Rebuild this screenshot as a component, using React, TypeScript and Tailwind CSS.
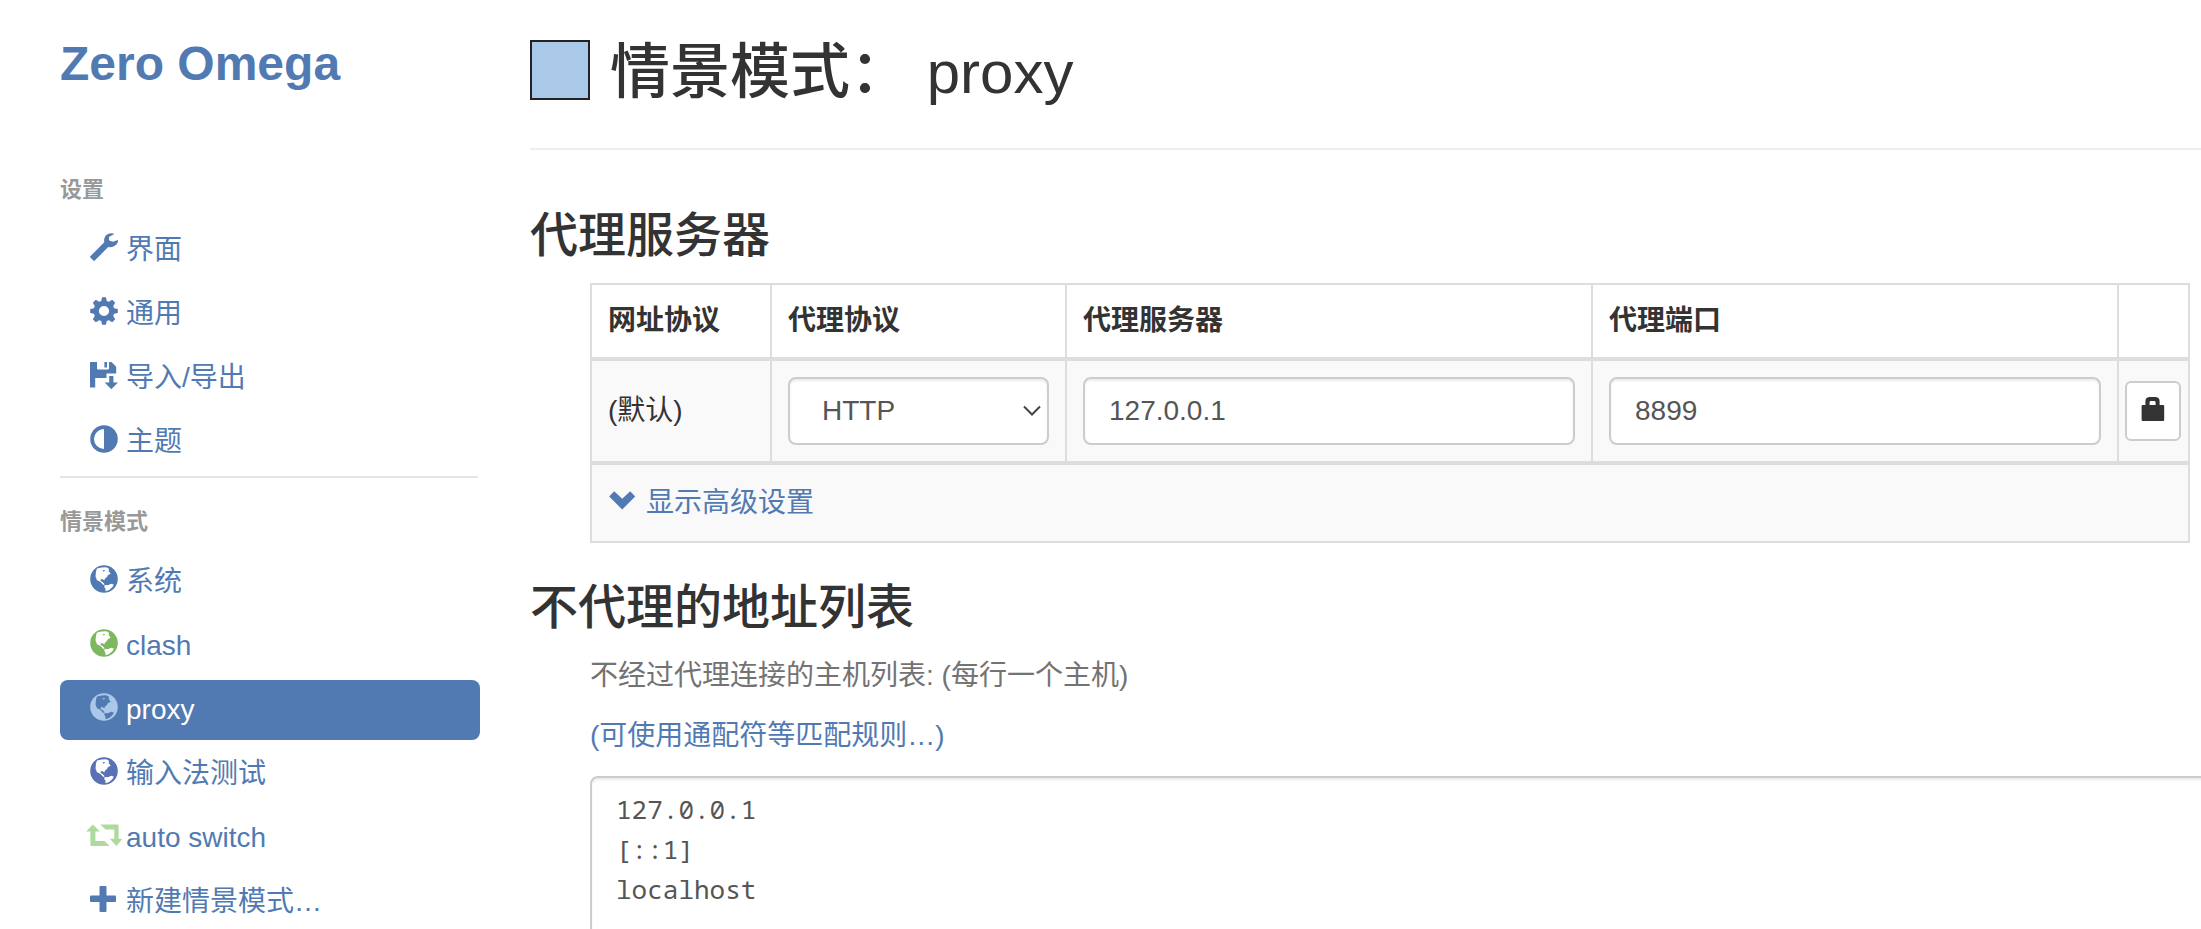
import React from 'react';

type IconProps = { className?: string };

const WrenchIcon: React.FC<IconProps> = ({ className }) => (
    <svg viewBox="0 0 28 28" fill="currentColor" className={className} aria-hidden="true">
        <path d="M24.4 0.9C21.9-0.3 18.3 0.1 16.1 2.3C14.3 4.2 13.8 6.7 14.3 9.3L0.4 23.2Q-0.3 23.9 0.4 24.6L3.4 27.6Q4.1 28.3 4.8 27.6L18.2 14C20.7 14.6 23.4 14.1 25.4 12.3C27.4 10.5 28.3 8.3 28 7L22.9 8.8L19.2 7.4L18.9 3.9Z" />
    </svg>
);

const CogIcon: React.FC<IconProps> = ({ className }) => (
    <svg viewBox="0 0 28 28" fill="currentColor" className={className} aria-hidden="true">
        <path
            fillRule="evenodd"
            d="M12.1 0.3H15.9L16.8 3.9L18.8 4.7L22.2 2.8L25.2 5.8L23.2 9L24.1 11.2L27.8 12.1V15.9L24.1 16.8L23.2 19L25.2 22.2L22.2 25.2L18.8 23.3L16.8 24.1L15.9 27.7H12.1L11.2 24.1L9.2 23.3L5.8 25.2L2.8 22.2L4.8 19L3.9 16.8L0.2 15.9V12.1L3.9 11.2L4.8 9L2.8 5.8L5.8 2.8L9.2 4.7L11.2 3.9ZM14 8.9A5.1 5.1 0 1 0 14 19.1A5.1 5.1 0 1 0 14 8.9Z"
        />
    </svg>
);

const SaveIcon: React.FC<IconProps> = ({ className }) => (
    <svg viewBox="0 0 28 28" fill="currentColor" className={className} aria-hidden="true">
        <path d="M0.6 1H7V7.6Q7 8.4 7.8 8.4H18.2Q19 8.4 19 7.6V1H21.5L26.2 5.7V12.4H16.5V17H5.2V26.5H0.6Q0 26.5 0 25.9V1.6Q0 1 0.6 1ZM14.4 1H17V6.4H14.4Z" />
        <path d="M19.2 15H23.4V21.6H28L21.3 28.2L14.6 21.6H19.2Z" />
    </svg>
);

const AdjustIcon: React.FC<IconProps> = ({ className }) => (
    <svg viewBox="0 0 28 28" fill="currentColor" className={className} aria-hidden="true">
        <path fillRule="evenodd" d="M14 0.2A13.8 13.8 0 1 1 14 27.8A13.8 13.8 0 1 1 14 0.2ZM14 4A10 10 0 0 0 14 24Z" />
    </svg>
);

const GlobeIcon: React.FC<IconProps> = ({ className }) => (
    <svg viewBox="0 0 28 28" fill="currentColor" className={className} aria-hidden="true">
        <path
            fillRule="evenodd"
            d="M14 0.2A13.8 13.8 0 1 1 14 27.8A13.8 13.8 0 1 1 14 0.2ZM7 3.6L6 6.5L5.5 11.5L7 15.2L10.2 16.8L12.6 19.2L14.2 20.2L14.4 19L12.9 17.2L11 16.2L10.4 14.8L11.6 13.9L13.2 14.4L14.3 15.6L15 13.6L17 12L17.8 10.3L20.6 8.8L19.7 7.2L18.6 6.2L19 5.2L18.5 3.2L16.2 2.2L11.5 2.5ZM14.6 20.2L14.2 21.8L15.4 23.8L15.6 26.2L19.2 25L22.5 22L23.8 19.4L21 18.7L18.5 20ZM12.4 5.6L14.2 5L15.3 5.8L13.2 6.6Z"
        />
    </svg>
);

const RetweetIcon: React.FC<IconProps> = ({ className }) => (
    <svg viewBox="0 0 36 28" fill="currentColor" className={className} aria-hidden="true">
        <path d="M6.9 3.5L13.9 10.6H9.4V20H18.5L23.5 25H5.3Q4.4 25 4.4 24.1V10.6H0Z" />
        <path d="M14.3 3.5H31.6Q32.6 3.5 32.6 4.4V17.8H36.3L30.5 25L23.8 17.8H28.3V8.6H19.5Z" />
    </svg>
);

const PlusIcon: React.FC<IconProps> = ({ className }) => (
    <svg viewBox="0 0 28 28" fill="currentColor" className={className} aria-hidden="true">
        <path d="M10.5 1H15.5Q16.5 1 16.5 2V10.5H25Q26 10.5 26 11.5V16Q26 17 25 17H16.5V26Q16.5 27 15.5 27H10.5Q9.5 27 9.5 26V17H1Q0 17 0 16V11.5Q0 10.5 1 10.5H9.5V2Q9.5 1 10.5 1Z" />
    </svg>
);

const ChevronIcon: React.FC<IconProps> = ({ className }) => (
    <svg viewBox="0 0 28 28" fill="currentColor" className={className} aria-hidden="true">
        <path d="M6.2 5.2L14.2 12.8L22.2 5.2L27.2 10.4L14.2 23.6L1.2 10.4Z" />
    </svg>
);

const LockIcon: React.FC<IconProps> = ({ className }) => (
    <svg viewBox="0 0 24 24" fill="currentColor" className={className} aria-hidden="true">
        <path
            fillRule="evenodd"
            d="M8.2 0H14.8Q18.6 0.6 18.6 4.2V8H22Q23.2 8 23.2 9.2V22.8Q23.2 24 22 24H1.8Q0.6 24 0.6 22.8V9.2Q0.6 8 1.8 8H4.4V4.2Q4.4 0.6 8.2 0ZM9.4 4L8.6 5V8H14.6V5L13.8 4Z"
        />
    </svg>
);

const SETTINGS = [
    { label: '界面', icon: WrenchIcon },
    { label: '通用', icon: CogIcon },
    { label: '导入/导出', icon: SaveIcon },
    { label: '主题', icon: AdjustIcon },
];

const PROFILES = [
    { label: '系统', icon: GlobeIcon, color: 'text-[#527ab2]' },
    { label: 'clash', icon: GlobeIcon, color: 'text-[#7db75f]' },
    { label: 'proxy', icon: GlobeIcon, color: 'text-[#aac9e9]', active: true },
    { label: '输入法测试', icon: GlobeIcon, color: 'text-[#5872b5]' },
    { label: 'auto switch', icon: RetweetIcon, color: 'text-[#aedb9c]', wide: true },
    { label: '新建情景模式…', icon: PlusIcon, color: 'text-[#527ab2]' },
];

type NavItemProps = {
    label: string;
    icon: React.FC<IconProps>;
    color?: string;
    active?: boolean;
    wide?: boolean;
};

const NavItem: React.FC<NavItemProps> = ({ label, icon: Icon, color = '', active, wide }) => (
    <li>
        <a
            href="#"
            aria-current={active ? 'page' : undefined}
            className={`flex h-15 items-center gap-2 rounded-lg px-[30px] ${active ? 'bg-[#527ab2] text-white' : 'text-[#527ab2]'}`}
        >
            <span className="flex w-7 shrink-0 justify-center pb-1.5">
                <Icon className={`h-7 shrink-0 ${wide ? 'w-9' : 'w-7'} ${color}`} />
            </span>
            {label}
        </a>
    </li>
);

const NavHeader: React.FC<{ children: React.ReactNode }> = ({ children }) => (
    <h2 className="text-[22px] leading-10 font-bold text-[#999]">{children}</h2>
);

const inputStyle =
    'h-17 w-full rounded-lg border-2 border-[#ccc] bg-white px-6 text-[#555] shadow-[inset_0_2px_2px_rgba(0,0,0,0.075)]';
const cell = 'border-2 border-[#ddd] px-4 text-left';

export default function App() {
    return (
        <div className="flex h-screen overflow-hidden bg-white font-['Liberation_Sans','Noto_Sans_CJK_SC',sans-serif] text-[28px] leading-10 text-[#333]">
            <aside className="ml-15 w-105 shrink-0">
                <h1 className="pt-10 pb-0.5 text-5xl leading-12 font-bold text-[#527ab2]">Zero Omega</h1>
                <nav className="pt-20">
                    <NavHeader>设置</NavHeader>
                    <ul className="flex flex-col gap-1 pt-2.5">
                        {SETTINGS.map((item) => (
                            <NavItem key={item.label} {...item} />
                        ))}
                    </ul>
                    <hr className="my-1 mr-[2px] border-t-2 border-[#e5e5e5]" />
                    <div className="pt-5">
                        <NavHeader>情景模式</NavHeader>
                    </div>
                    <ul className="flex flex-col gap-1 pt-2.5">
                        {PROFILES.map((item) => (
                            <NavItem key={item.label} {...item} />
                        ))}
                    </ul>
                </nav>
            </aside>

            <main className="ml-[50px] min-w-0 flex-1">
                <header className="flex h-[150px] items-start border-b-2 border-[#eee] pt-10">
                    <input
                        type="text"
                        readOnly
                        aria-label="颜色"
                        className="size-15 shrink-0 border-2 border-[#222] bg-[#aac9e9]"
                    />
                    <h2 className="ml-5 text-6xl leading-[66px] font-medium">情景模式： <span className="font-normal">proxy</span></h2>
                </header>

                <section className="pt-[58px]">
                    <h3 className="text-5xl leading-14 font-medium">代理服务器</h3>
                    <div className="mt-[19px] mr-[11px] ml-15">
                        <table className="w-full table-fixed border-collapse">
                            <colgroup>
                                <col className="w-[180px]" />
                                <col className="w-[295px]" />
                                <col />
                                <col />
                                <col className="w-[71px]" />
                            </colgroup>
                            <thead>
                                <tr className="h-[75px] border-b-4 border-[#ddd]">
                                    <th scope="col" className={cell}>网址协议</th>
                                    <th scope="col" className={cell}>代理协议</th>
                                    <th scope="col" className={cell}>代理服务器</th>
                                    <th scope="col" className={cell}>代理端口</th>
                                    <td className={cell} />
                                </tr>
                            </thead>
                            <tbody className="bg-[#f9f9f9]">
                                <tr className="h-[104px] border-b-4 border-[#ddd]">
                                    <td className={cell}>(默认)</td>
                                    <td className={cell}>
                                        <div className="relative">
                                            <select aria-label="代理协议" defaultValue="HTTP" className={`${inputStyle} block appearance-none pl-8`}>
                                                <option>HTTP</option>
                                                <option>HTTPS</option>
                                                <option>SOCKS4</option>
                                                <option>SOCKS5</option>
                                            </select>
                                            <svg
                                                viewBox="0 0 18 12"
                                                fill="none"
                                                stroke="#444"
                                                strokeWidth="2"
                                                className="pointer-events-none absolute top-7 right-2 h-3 w-[18px]"
                                                aria-hidden="true"
                                            >
                                                <path d="M1 1.5L9 9.5L17 1.5" />
                                            </svg>
                                        </div>
                                    </td>
                                    <td className={cell}>
                                        <input type="text" aria-label="代理服务器" defaultValue="127.0.0.1" className={`${inputStyle} block`} />
                                    </td>
                                    <td className={cell}>
                                        <input type="text" aria-label="代理端口" defaultValue="8899" className={`${inputStyle} block`} />
                                    </td>
                                    <td className="border-2 border-[#ddd] pl-1.5">
                                        <button
                                            type="button"
                                            aria-label="代理登录"
                                            className="flex h-15 w-14 justify-center rounded-md border-2 border-[#ccc] bg-white pt-[14px]"
                                        >
                                            <LockIcon className="size-6" />
                                        </button>
                                    </td>
                                </tr>
                                <tr className="h-[79px]">
                                    <td colSpan={5} className="border-2 border-[#ddd] px-4">
                                        <a href="#" className="flex w-fit items-center gap-2.5 text-[#527ab2]">
                                            <ChevronIcon className="mb-1.5 size-7" />
                                            显示高级设置
                                        </a>
                                    </td>
                                </tr>
                            </tbody>
                        </table>
                    </div>
                </section>

                <section className="pt-[37px]">
                    <h3 className="text-5xl leading-14 font-medium">不代理的地址列表</h3>
                    <div className="ml-15 flex flex-col gap-5 pt-5">
                        <p className="text-[#737373]">不经过代理连接的主机列表: (每行一个主机)</p>
                        <p>
                            <a href="#" className="text-[#527ab2]">(可使用通配符等匹配规则…)</a>
                        </p>
                        <textarea
                            aria-label="不代理的地址列表"
                            rows={8}
                            defaultValue={'127.0.0.1\n[::1]\nlocalhost'}
                            className="-mr-4 resize-none rounded-lg border-2 border-[#ccc] px-6 py-[11px] font-['Noto_Sans_Mono','DejaVu_Sans_Mono',monospace] text-[26px] leading-10 text-[#555] shadow-[inset_0_2px_2px_rgba(0,0,0,0.075)]"
                        />
                    </div>
                </section>
            </main>
        </div>
    );
}
